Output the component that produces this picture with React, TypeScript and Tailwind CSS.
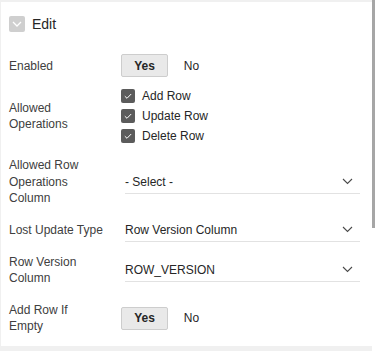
import React from "react";

const Chevron = ({ className = "" }: { className?: string }) => (
  <svg width="11" height="7" viewBox="0 0 11 7" className={className}>
    <polyline points="1,1 5.5,5.5 10,1" fill="none" stroke="#4a4a4a" strokeWidth="1.1" />
  </svg>
);

const Check = () => (
  <svg width="14" height="14" viewBox="0 0 14 14">
    <polyline points="3.8,7.2 6,9.3 10.2,5" fill="none" stroke="#ffffff" strokeWidth="1" />
  </svg>
);

const Toggle = () => (
  <div className="flex h-[23px]">
    <div className="w-[47px] h-[23px] flex items-center justify-center bg-[#e9e9e9] border border-[#cdcdcd] rounded-[2px] font-bold text-[12px] text-[#262626]">
      Yes
    </div>
    <div className="w-[47px] h-[23px] flex items-center justify-center text-[12px] text-[#262626]">
      No
    </div>
  </div>
);

const Select = ({ value }: { value: string }) => (
  <div className="ml-[4px] w-[235px] h-[24px] flex items-center justify-between border-b border-[#e2e2e2] text-[12px] text-[#262626]">
    <span>{value}</span>
    <Chevron className="mr-[7px]" />
  </div>
);

const CheckItem = ({ label }: { label: string }) => (
  <div className="h-[20px] flex items-center gap-[7px]">
    <div className="w-[14px] h-[14px] rounded-[2px] bg-[#5b5b5b] flex items-center justify-center">
      <Check />
    </div>
    <span className="text-[12px] text-[#262626]">{label}</span>
  </div>
);

const Label = ({ children }: { children: React.ReactNode }) => (
  <div className="w-[112px] shrink-0 text-[12px] leading-[16px] text-[#404040] pr-2">{children}</div>
);

export default function App() {
  return (
    <div
      className="w-[375px] h-[351px] flex overflow-hidden"
      style={{ fontFamily: '"Liberation Sans", Arial, sans-serif' }}
    >
      <div className="w-[372px] h-[351px] bg-[#f0f0f0] pt-[2px] pl-[1px] pb-[5px]">
        <div className="w-full h-full bg-white pl-[8px]">
          {/* header */}
          <div className="pt-[14px] flex items-center h-[30px]">
            <div className="w-[16px] h-[16px] rounded-[2px] bg-[#cfcfcf] flex items-center justify-center">
              <svg width="10" height="6" viewBox="0 0 10 6">
                <polyline points="1,1 5,5 9,1" fill="none" stroke="#ffffff" strokeWidth="1.3" />
              </svg>
            </div>
            <span className="ml-[7px] text-[14px] text-[#262626]">Edit</span>
          </div>

          {/* Enabled */}
          <div className="mt-[22px] flex items-center h-[23px]">
            <Label>Enabled</Label>
            <Toggle />
          </div>

          {/* Allowed Operations */}
          <div className="mt-[9px] flex items-center h-[60px]">
            <Label>
              Allowed
              <br />
              Operations
            </Label>
            <div className="flex flex-col">
              <CheckItem label="Add Row" />
              <CheckItem label="Update Row" />
              <CheckItem label="Delete Row" />
            </div>
          </div>

          {/* Allowed Row Operations Column */}
          <div className="mt-[12px] flex items-center h-[48px]">
            <div className="w-[112px] shrink-0 text-[12px] leading-[16.5px] text-[#404040]">
              Allowed Row
              <br />
              Operations
              <br />
              Column
            </div>
            <Select value="- Select -" />
          </div>

          {/* Lost Update Type */}
          <div className="mt-[12px] flex items-center h-[24px]">
            <Label>Lost Update Type</Label>
            <Select value="Row Version Column" />
          </div>

          {/* Row Version Column */}
          <div className="mt-[12px] flex items-center h-[32px]">
            <Label>
              Row Version
              <br />
              Column
            </Label>
            <Select value="ROW_VERSION" />
          </div>

          {/* Add Row If Empty */}
          <div className="mt-[16px] flex items-center h-[32px]">
            <Label>
              Add Row If
              <br />
              Empty
            </Label>
            <Toggle />
          </div>
        </div>
      </div>
      <div className="w-[3px] h-[351px] bg-white">
        <div className="w-[3px] h-[228px] bg-[#a6a6a6]" />
      </div>
    </div>
  );
}
